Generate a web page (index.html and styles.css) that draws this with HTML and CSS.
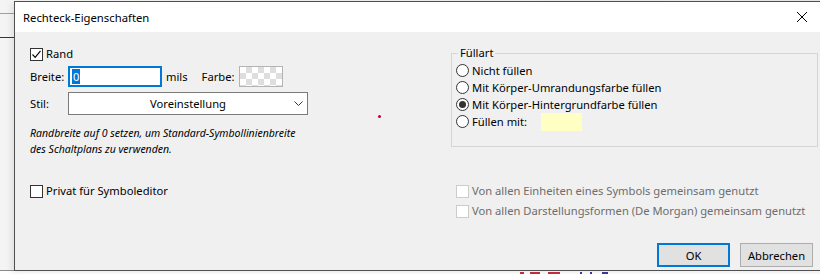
FILE: index.html
```html
<!DOCTYPE html>
<html lang="de">
<head>
    <meta charset="UTF-8">
    <title>Rechteck-Eigenschaften</title>
    <link rel="stylesheet" href="styles.css">
</head>
<body>
    <div class="desktop">
        <div class="app-line grey"></div>
        <div class="app-line blue"></div>
        <div class="canvas-marks">
            <span class="mark red" style="left: 520px; width: 4px;"></span>
            <span class="mark red" style="left: 530px; width: 10px;"></span>
            <span class="mark red" style="left: 548px; width: 12px;"></span>
            <span class="mark blue" style="left: 580px; width: 2px;"></span>
            <span class="mark blue" style="left: 590px; width: 2px;"></span>
            <span class="mark blue" style="left: 602px; width: 6px;"></span>
        </div>

        <div class="dialog">
            <div class="titlebar">
                <span class="title">Rechteck-Eigenschaften</span>
                <span class="close">
                    <svg width="12" height="12" viewBox="0 0 12 12"><path d="M1 1 L11 11 M11 1 L1 11" stroke="#000" stroke-width="1" fill="none"/></svg>
                </span>
            </div>
            <div class="content">
                <span class="red-dot"></span>
                <div class="columns">
                    <div class="col-left">
                        <label class="check">
                            <span class="box">
                                <svg width="11" height="11" viewBox="0 0 11 11"><path d="M1.5 5.5 L4.2 8.3 L9.5 1.8" stroke="#000" stroke-width="1.1" fill="none"/></svg>
                            </span>
                            Rand
                        </label>
                        <div class="row">
                            <span class="lbl">Breite:</span>
                            <span class="input"><span class="sel">0</span></span>
                            <span class="unit">mils</span>
                            <span class="lbl-farbe">Farbe:</span>
                            <span class="swatch checker"></span>
                        </div>
                        <div class="row">
                            <span class="lbl">Stil:</span>
                            <span class="select">
                                Voreinstellung
                                <svg class="chev" width="9" height="6" viewBox="0 0 9 6"><path d="M0.5 0.5 L4.5 4.5 L8.5 0.5" stroke="#333" stroke-width="1" fill="none"/></svg>
                            </span>
                        </div>
                        <p class="note">Randbreite auf 0 setzen, um Standard-Symbollinienbreite<br>des Schaltplans zu verwenden.</p>
                    </div>
                    <div class="col-right">
                        <div class="group">
                            <span class="legend">Füllart</span>
                            <label class="radio"><span class="circle"></span>Nicht füllen</label>
                            <label class="radio"><span class="circle"></span>Mit Körper-Umrandungsfarbe füllen</label>
                            <label class="radio"><span class="circle on"></span>Mit Körper-Hintergrundfarbe füllen</label>
                            <label class="radio"><span class="circle"></span>Füllen mit:<span class="swatch yellow"></span></label>
                        </div>
                    </div>
                </div>

                <div class="columns lower">
                    <div class="col-left">
                        <label class="check"><span class="box"></span>Privat für Symboleditor</label>
                    </div>
                    <div class="col-right shared">
                        <label class="check disabled"><span class="box"></span>Von allen Einheiten eines Symbols gemeinsam genutzt</label>
                        <label class="check disabled"><span class="box"></span>Von allen Darstellungsformen (De Morgan) gemeinsam genutzt</label>
                    </div>
                </div>

                <div class="buttons">
                    <span class="btn default">OK</span>
                    <span class="btn">Abbrechen</span>
                </div>
            </div>
        </div>
    </div>
</body>
</html>
```

FILE: styles.css
```css
body {
    margin: 0;
    font-family: 'Noto Sans', 'Open Sans', sans-serif;
    font-size: 11.2px;
    color: #000000;
    background-color: #ffffff;
}
.desktop {
    position: relative;
    width: 820px;
    height: 274px;
    overflow: hidden;
    background: linear-gradient(to right, #f4f4f4, #e9e9e6);
}
.app-line {
    position: absolute;
    left: 0;
    width: 14px;
    height: 1px;
}
.app-line.grey {
    top: 13px;
    background-color: #a0a0a0;
}
.app-line.blue {
    top: 37px;
    background-color: #2b2b8c;
}
.canvas-marks {
    position: absolute;
    left: 0;
    top: 270px;
    width: 820px;
    height: 4px;
    background-color: #ffffff;
    border-top: 1px solid #8a8a8a;
}
.mark {
    position: absolute;
    top: 1px;
    height: 3px;
}
.mark.red {
    background-color: #c83040;
}
.mark.blue {
    background-color: #3a3a9a;
}

/* dialog window */
.dialog {
    position: absolute;
    left: 14px;
    top: 1px;
    width: 820px;
    height: 268px;
    border: 1px solid #4f4f4f;
    background-color: #f0f0f0;
    box-shadow: -3px 2px 6px rgba(0, 0, 0, 0.08);
    white-space: nowrap;
}
.titlebar {
    display: flex;
    align-items: center;
    justify-content: space-between;
    height: 30px;
    background-color: #ffffff;
    padding-left: 8px;
}
.title {
    font-size: 11.3px;
}
.close {
    display: flex;
    align-items: center;
    justify-content: center;
    width: 24px;
    height: 24px;
    margin-right: 21px;
}
.content {
    position: relative;
    padding: 15px 0 0 15px;
}
.red-dot {
    position: absolute;
    left: 363px;
    top: 83px;
    width: 3px;
    height: 3px;
    border-radius: 50%;
    background-color: #c0002a;
}
.columns {
    display: flex;
}
.col-left {
    width: 421px;
}
.col-right {
    width: 367px;
}

/* checkboxes and radios */
.check {
    display: flex;
    align-items: center;
    height: 14px;
    line-height: 14px;
}
.box {
    display: flex;
    align-items: center;
    justify-content: center;
    width: 11px;
    height: 11px;
    border: 1px solid #333333;
    background-color: #ffffff;
    margin-right: 3px;
}
.check.disabled {
    color: #6d6d6d;
}
.check.disabled .box {
    border-color: #cccccc;
}
.radio {
    display: flex;
    align-items: center;
    height: 17px;
    margin-left: 4px;
}
.circle {
    display: flex;
    align-items: center;
    justify-content: center;
    width: 11px;
    height: 11px;
    border: 1px solid #333333;
    border-radius: 50%;
    background-color: #ffffff;
    margin-right: 3px;
}
.circle.on::after {
    content: "";
    width: 7px;
    height: 7px;
    border-radius: 50%;
    background-color: #333333;
}

/* form rows */
.row {
    display: flex;
    align-items: center;
    margin-top: 5px;
}
.lbl {
    width: 38px;
}
.input {
    display: flex;
    align-items: center;
    width: 90px;
    height: 19px;
    padding-left: 2px;
    border: 1px solid #0078d7;
    box-shadow: inset 0 0 0 1px #0078d7;
    background-color: #ffffff;
}
.sel {
    background-color: #0078d7;
    color: #ffffff;
    padding: 0 1px;
    line-height: 15px;
    margin-left: 1px;
}
.unit {
    margin-left: 4px;
}
.lbl-farbe {
    margin-left: 14px;
}
.swatch {
    display: inline-block;
    width: 42px;
    height: 19px;
    border: 1px solid #b4b4b4;
    margin-left: 4px;
}
.checker {
    background-color: #ffffff;
    background-image:
        linear-gradient(45deg, #dedede 25%, transparent 25%, transparent 75%, #dedede 75%),
        linear-gradient(45deg, #dedede 25%, transparent 25%, transparent 75%, #dedede 75%);
    background-size: 12px 12px;
    background-position: 0 0, 6px 6px;
}
.select {
    position: relative;
    display: flex;
    align-items: center;
    justify-content: center;
    width: 238px;
    height: 21px;
    border: 1px solid #7a7a7a;
    background-color: #ffffff;
}
.chev {
    position: absolute;
    right: 4px;
    top: 8px;
}
.note {
    margin: 10px 0 0;
    font-size: 10.5px;
    font-style: italic;
    line-height: 16px;
}

/* Füllart group */
.group {
    position: relative;
    margin-top: 6px;
    height: 84px;
    padding: 8px 0 0 0;
    border: 1px solid #d5d5d5;
}
.legend {
    position: absolute;
    left: 6px;
    top: -9px;
    padding: 0 2px;
    background-color: #f0f0f0;
}
.swatch.yellow {
    width: 41px;
    height: 18px;
    margin-left: 14px;
    border: none;
    background-color: #ffffc4;
}

/* lower area */
.lower {
    margin-top: 27px;
}
.shared {
    padding-left: 5px;
}
.shared .check + .check {
    margin-top: 6px;
}

/* buttons */
.buttons {
    display: flex;
    justify-content: flex-end;
    gap: 10px;
    width: 783px;
    margin-top: 25px;
}
.btn {
    display: flex;
    align-items: center;
    justify-content: center;
    width: 71px;
    height: 22px;
    border: 1px solid #adadad;
    background-color: #e1e1e1;
}
.btn.default {
    border: 2px solid #0078d7;
    width: 69px;
    height: 20px;
}
```
